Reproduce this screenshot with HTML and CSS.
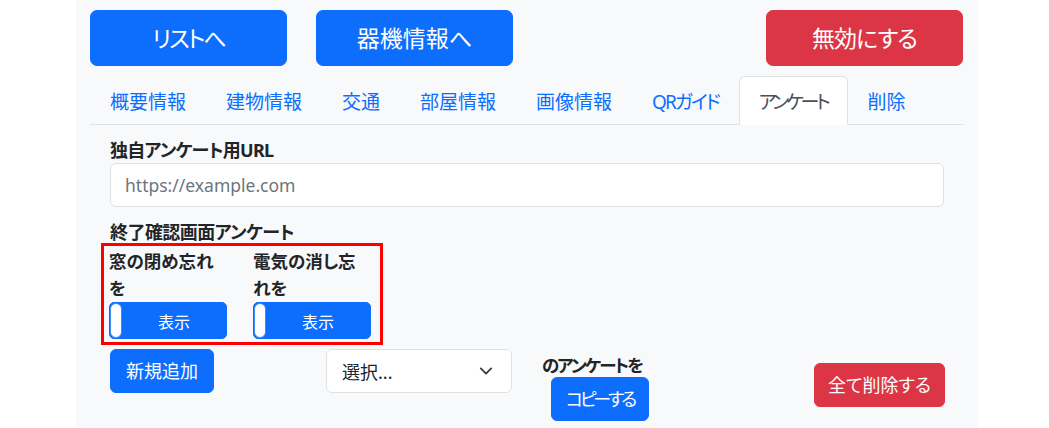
FILE: index.html
```html
<!DOCTYPE html>
<html lang="ja">
<head>
<meta charset="utf-8">
<title>アンケート</title>
<link rel="stylesheet" href="styles.css">
</head>
<body>
<div class="page">
  <div class="topbar">
    <button class="btn btn-lg btn-primary kana-2">リストへ</button>
    <button class="btn btn-lg btn-primary">器機情報へ</button>
    <button class="btn btn-lg btn-danger push kana-1">無効にする</button>
  </div>

  <ul class="tabs">
    <li><a class="tab">概要情報</a></li>
    <li><a class="tab">建物情報</a></li>
    <li><a class="tab">交通</a></li>
    <li><a class="tab">部屋情報</a></li>
    <li><a class="tab">画像情報</a></li>
    <li><a class="tab tab-qr">QRガイド</a></li>
    <li><a class="tab tab-kana active">アンケート</a></li>
    <li><a class="tab">削除</a></li>
  </ul>

  <div class="pane">
    <div class="label label-1">独自アンケート用URL</div>
    <input class="input" type="text" placeholder="https://example.com">

    <div class="label label-2">終了確認画面アンケート</div>
    <div class="highlight">
      <div class="opt">
        <div class="opt-label">窓の閉め忘れを</div>
        <div class="switch"><span class="knob"></span><span class="switch-text">表示</span></div>
      </div>
      <div class="opt">
        <div class="opt-label">電気の消し忘れを</div>
        <div class="switch"><span class="knob"></span><span class="switch-text">表示</span></div>
      </div>
    </div>

    <div class="actions">
      <div class="cell">
        <button class="btn btn-primary">新規追加</button>
      </div>
      <div class="cell">
        <div class="select">
          <span class="select-text">選択...</span>
          <svg class="chev" width="14" height="10" viewBox="0 0 16 10" aria-hidden="true">
            <path d="M2 2l6 6 6-6" fill="none" stroke="#343a40" stroke-width="2" stroke-linecap="round" stroke-linejoin="round"/>
          </svg>
        </div>
      </div>
      <div class="cell copy-cell">
        <div class="copy-label">のアンケートを</div>
        <button class="btn btn-primary copy-btn">コピーする</button>
      </div>
      <div class="cell del-cell">
        <button class="btn btn-danger">全て削除する</button>
      </div>
    </div>
  </div>
</div>
</body>
</html>
```

FILE: styles.css
```css
* {
  box-sizing: border-box;
}

html, body {
  margin: 0;
  padding: 0;
  background: #ffffff;
}

body {
  font-family: "Noto Sans", "Noto Sans CJK JP", sans-serif;
  font-feature-settings: "palt";
  color: #212529;
  width: 1049px;
  height: 428px;
  overflow: hidden;
}

.page {
  margin-left: 76px;
  width: 902px;
  height: 428px;
  background: #f8f9fa;
  padding: 10px 15px 0 14px;
}

.btn {
  font-family: inherit;
  font-feature-settings: "palt";
  border: 1px solid transparent;
  border-radius: 6px;
  color: #ffffff;
  font-size: 18.5px;
  line-height: 1;
  height: 44px;
  padding: 0 15px;
  cursor: pointer;
  display: inline-flex;
  align-items: center;
  justify-content: center;
}

.btn-lg {
  width: 197px;
  height: 56px;
  font-size: 23px;
  border-radius: 7px;
}

.btn-primary {
  background: #0d6efd;
  border-color: #0d6efd;
}

.btn-danger {
  background: #dc3545;
  border-color: #dc3545;
}

.kana-1 {
  letter-spacing: -1px;
}

.kana-2 {
  letter-spacing: -2px;
}

.topbar {
  display: flex;
  gap: 29px;
}

.push {
  margin-left: auto;
}

.tabs {
  list-style: none;
  margin: 10px 0 0;
  padding: 0;
  display: flex;
  border-bottom: 1px solid #dee2e6;
}

.tab {
  display: flex;
  align-items: center;
  height: 49px;
  padding: 0 19px;
  margin-bottom: -1px;
  font-size: 19px;
  color: #0d6efd;
  border: 1px solid transparent;
  border-radius: 6px 6px 0 0;
}

.tab-qr {
  letter-spacing: -2px;
}

.tab-kana {
  letter-spacing: -3.2px;
}

.tab.active {
  color: #495057;
  background: #ffffff;
  border-color: #dee2e6 #dee2e6 #ffffff;
}

.pane {
  padding: 12px 19px 0 20px;
}

.label {
  font-weight: 700;
  font-size: 18px;
  line-height: 26px;
}

.label-1 {
  letter-spacing: -0.75px;
}

.input {
  display: block;
  width: 100%;
  height: 44px;
  margin: 0;
  padding: 0 14px;
  border: 1px solid #dee2e6;
  border-radius: 6px;
  background: #ffffff;
  font-family: inherit;
  font-size: 17.5px;
  color: #212529;
}

.input::placeholder {
  color: #6c757d;
}

.label-2 {
  margin-top: 14px;
  line-height: 22px;
  letter-spacing: -0.55px;
}

.highlight {
  margin-left: -9px;
  width: 282px;
  border: 3px solid #ff0000;
  padding: 2px 8px 3px 5px;
  display: flex;
  gap: 26px;
}

.opt {
  width: 118px;
}

.opt-label {
  font-weight: 700;
  font-size: 17.5px;
  line-height: 27px;
}

.switch {
  display: flex;
  height: 37px;
  background: #0d6efd;
  border-radius: 5px;
  border: 1px solid #0d6efd;
}

.knob {
  width: 12px;
  background: #ffffff;
  border-radius: 6px;
  border: 1px solid #3d8bfd;
}

.switch-text {
  flex: 1;
  display: flex;
  align-items: center;
  justify-content: center;
  color: #ffffff;
  font-size: 16px;
}

.actions {
  margin-top: 4px;
  display: grid;
  grid-template-columns: repeat(4, 1fr);
  column-gap: 30px;
  align-items: start;
}

.cell {
  display: flex;
  flex-direction: column;
  align-items: flex-start;
}

.select {
  width: 100%;
  height: 44px;
  background: #ffffff;
  border: 1px solid #dee2e6;
  border-radius: 6px;
  display: flex;
  align-items: center;
  padding: 0 18px 0 15px;
}

.select-text {
  flex: 1;
  font-size: 18px;
  color: #212529;
}

.chev {
  display: block;
}

.copy-cell {
  padding-top: 5px;
}

.copy-label {
  font-weight: 700;
  font-size: 17.5px;
  line-height: 23px;
  letter-spacing: -2px;
}

.actions .btn {
  font-size: 18px;
}

.copy-btn {
  margin-left: 9px;
  width: 98px;
  padding: 0;
}

.actions .copy-btn {
  letter-spacing: -3.2px;
}

.del-cell {
  align-items: flex-end;
  padding-top: 14px;
}

.del-cell .btn {
  width: 131px;
  padding: 0;
  margin-right: -1px;
}
```
